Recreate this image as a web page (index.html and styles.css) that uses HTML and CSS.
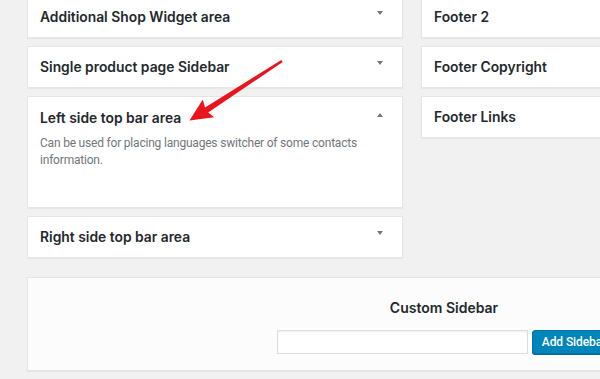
FILE: index.html
```html
<!DOCTYPE html>
<html>
<head>
<meta charset="utf-8">
<link rel="stylesheet" href="styles.css">
</head>
<body>
<div class="page">
  <div class="cols">
    <div class="col col-left">
      <div class="widget">
        <div class="widget-top"><h3>Additional Shop Widget area</h3><span class="toggle"><svg width="6" height="4" viewBox="0 0 6 4"><polygon points="0,0 6,0 3,4" fill="#72777c"/></svg></span></div>
      </div>
      <div class="widget">
        <div class="widget-top"><h3>Single product page Sidebar</h3><span class="toggle"><svg width="6" height="4" viewBox="0 0 6 4"><polygon points="0,0 6,0 3,4" fill="#72777c"/></svg></span></div>
      </div>
      <div class="widget widget-open">
        <div class="widget-top"><h3>Left side top bar area</h3><span class="toggle"><svg width="6" height="4" viewBox="0 0 6 4"><polygon points="0,4 6,4 3,0" fill="#72777c"/></svg></span></div>
        <p class="desc">Can be used for placing languages switcher of some contacts information.</p>
      </div>
      <div class="widget">
        <div class="widget-top"><h3>Right side top bar area</h3><span class="toggle"><svg width="6" height="4" viewBox="0 0 6 4"><polygon points="0,0 6,0 3,4" fill="#72777c"/></svg></span></div>
      </div>
    </div>
    <div class="col col-right">
      <div class="widget"><div class="widget-top"><h3>Footer 2</h3></div></div>
      <div class="widget"><div class="widget-top"><h3>Footer Copyright</h3></div></div>
      <div class="widget"><div class="widget-top"><h3>Footer Links</h3></div></div>
    </div>
  </div>
  <div class="custom">
    <h3 class="custom-title">Custom Sidebar</h3>
    <div class="custom-form">
      <input class="custom-input" type="text">
      <button class="btn">Add Sidebar</button>
    </div>
  </div>
  <svg class="annot" width="600" height="379" viewBox="0 0 600 379">
    <path d="M281.3 60.0 L282.7 62.0 L208.2 112.4 L214.2 117.2 L189.5 120.5 L202.8 99.6 L205.0 107.6 Z" fill="#e8161c"/>
  </svg>
</div>
</body>
</html>
```

FILE: styles.css
```css
html, body {
  margin: 0;
  padding: 0;
}
body {
  background: #f1f1f1;
  font-family: Inter, "Open Sans", "Liberation Sans", sans-serif;
  color: #23282d;
  overflow: hidden;
  width: 600px;
  height: 379px;
}
.page {
  position: relative;
  width: 600px;
  height: 379px;
  overflow: hidden;
}
.cols {
  display: flex;
  gap: 18px;
  padding-left: 27px;
  margin-top: -4px;
  width: 1000px;
}
.col {
  display: flex;
  flex-direction: column;
  gap: 8px;
}
.col-left {
  width: 376px;
}
.col-right {
  width: 300px;
}
.widget {
  background: #fff;
  border: 1px solid #e5e5e5;
  box-shadow: 0 1px 1px rgba(0,0,0,0.04);
  box-sizing: border-box;
}
.widget-top {
  height: 40px;
  display: flex;
  align-items: center;
  justify-content: space-between;
  padding: 0 19px 0 12px;
}
.widget-top h3 {
  margin: 0;
  font-size: 13.85px;
  font-weight: 600;
  color: #23282d;
  letter-spacing: 0;
}
.toggle {
  display: flex;
  align-items: center;
  margin-top: -8px;
}
.widget-open {
  height: 112px;
}
.widget-open .widget-top {
  height: 42px;
}
.widget-open .toggle {
  margin-top: -7px;
}
.desc {
  margin: -4px 0 0 12px;
  width: 330px;
  font-family: Roboto, "Liberation Sans", sans-serif;
  font-size: 12px;
  letter-spacing: -0.2px;
  line-height: 17px;
  color: #72777c;
}
.custom {
  margin: 19px 0 0 27px;
  width: 834px;
  height: 94px;
  box-sizing: border-box;
  background: #fcfcfc;
  border: 1px solid #e5e5e5;
  box-shadow: 0 1px 1px rgba(0,0,0,0.04);
  display: flex;
  flex-direction: column;
  align-items: center;
  padding-top: 20px;
}
.custom-title {
  margin: 0;
  font-size: 14px;
  font-weight: 600;
  color: #23282d;
  line-height: 20px;
}
.custom-form {
  display: flex;
  gap: 4px;
  margin-top: 12px;
  margin-left: 5px;
}
.custom-input {
  width: 251px;
  height: 24px;
  box-sizing: border-box;
  border: 1px solid #ddd;
  background: #fff;
  box-shadow: inset 0 1px 2px rgba(0,0,0,0.07);
  margin: 0;
}
.btn {
  height: 24px;
  box-sizing: border-box;
  background: #0085ba;
  border: 1px solid #0073aa;
  border-radius: 3px;
  color: #fff;
  font-family: Roboto, "Liberation Sans", sans-serif;
  font-size: 12px;
  font-weight: 500;
  letter-spacing: -0.1px;
  padding: 0 9px;
  box-shadow: 0 1px 0 #006799;
  margin: 0;
}
.annot {
  position: absolute;
  left: 0;
  top: 0;
  pointer-events: none;
}
```
